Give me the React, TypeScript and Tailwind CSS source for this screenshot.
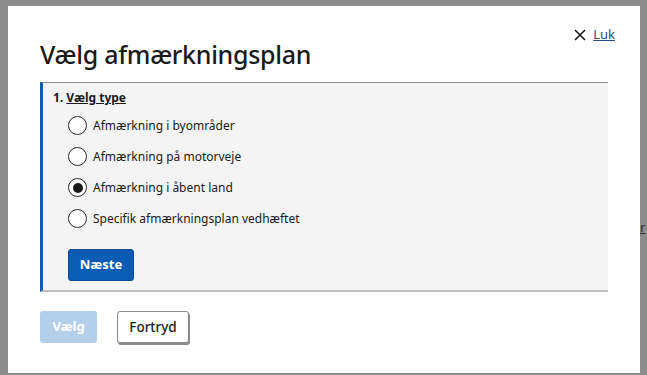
import React from "react";

const options = [
  "Afmærkning i byområder",
  "Afmærkning på motorveje",
  "Afmærkning i åbent land",
  "Specifik afmærkningsplan vedhæftet",
];

export default function App() {
  const selected = 2;
  return (
    <div
      className="w-[647px] h-[375px] bg-[#8c8c8c] overflow-hidden relative"
      style={{ fontFamily: '"Noto Sans", "Open Sans", sans-serif' }}
    >
      <div className="absolute left-[640px] top-[218px] text-[13px] text-[#2a2a2a] underline">r</div>
      <div className="ml-[8px] mt-[6px] w-[632px] h-[367px] bg-white relative">
        <button className="absolute right-[25px] top-[19px] flex items-center gap-[7px] text-[13px] text-[#1a1a1a]">
          <svg width="12" height="12" viewBox="0 0 12 12">
            <path d="M1 1 L11 11 M11 1 L1 11" stroke="#1a1a1a" strokeWidth="1.6" />
          </svg>
          <span className="underline text-[#2b4b8c]">Luk</span>
        </button>
        <div className="pl-[32px] pr-[32px] pt-[33px]">
          <h1 className="text-[25px] leading-[30px] font-medium text-[#1a1a1a] tracking-[-0.3px]">
            Vælg afmærkningsplan
          </h1>
          <div className="mt-[13px] bg-[#f4f4f4] border-l-[3px] border-l-[#0b5cb5] border-t border-t-[#8a8a8a] border-b-2 border-b-[#bdbdbd] h-[210px] pl-[10px] pt-[6px]">
            <div className="text-[12px] font-bold text-[#1a1a1a]">
              1. <span className="underline">Vælg type</span>
            </div>
            <div className="mt-[3px] pl-[15px] flex flex-col">
              {options.map((o, i) => (
                <label key={o} className="h-[31px] flex items-center gap-[6px] text-[12px] text-[#1a1a1a]">
                  <span className="w-[19px] h-[19px] rounded-full border-[1.5px] border-[#2a2a2a] bg-white flex items-center justify-center">
                    {i === selected && <span className="w-[10px] h-[10px] rounded-full bg-[#1a1a1a]" />}
                  </span>
                  {o}
                </label>
              ))}
            </div>
            <button className="mt-[15px] ml-[15px] w-[66px] h-[32px] rounded-[3px] bg-[#0b5cb5] border border-[#084a94] text-white font-bold text-[13px]">
              Næste
            </button>
          </div>
          <div className="mt-[19px] flex items-center gap-[20px]">
            <button className="w-[57px] h-[32px] rounded-[3px] bg-[#b4cfea] text-white font-bold text-[13px]">
              Vælg
            </button>
            <button
              className="w-[72px] h-[32px] rounded-[3px] bg-white border border-[#8a8a8a] text-[#1a1a1a] font-medium text-[13.5px] shadow-[1px_2px_0_#8a8a8a]"
            >
              Fortryd
            </button>
          </div>
        </div>
      </div>
    </div>
  );
}
